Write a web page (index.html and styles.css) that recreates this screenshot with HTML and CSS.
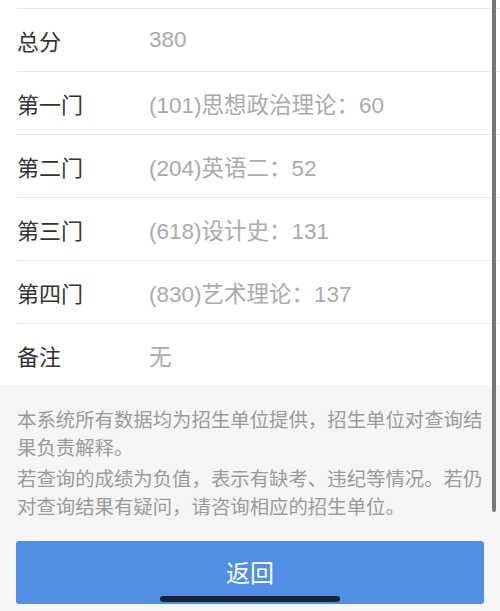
FILE: index.html
```html
<!DOCTYPE html>
<html lang="zh-CN">
<head>
<meta charset="utf-8">
<title>成绩查询结果</title>
<link rel="stylesheet" href="styles.css">
</head>
<body>
<div class="page">
  <div class="list">
    <div class="row-top"></div>
    <div class="row"><span class="label">总分</span><span class="value">380</span></div>
    <div class="row"><span class="label">第一门</span><span class="value">(101)思想政治理论：60</span></div>
    <div class="row"><span class="label">第二门</span><span class="value">(204)英语二：52</span></div>
    <div class="row"><span class="label">第三门</span><span class="value">(618)设计史：131</span></div>
    <div class="row"><span class="label">第四门</span><span class="value">(830)艺术理论：137</span></div>
    <div class="row last"><span class="label">备注</span><span class="value">无</span></div>
  </div>
  <div class="notice">
    <p>本系统所有数据均为招生单位提供，招生单位对查询结果负责解释。</p>
    <p>若查询的成绩为负值，表示有缺考、违纪等情况。若仍对查询结果有疑问，请咨询相应的招生单位。</p>
    <button class="back" type="button">返回</button>
  </div>
  <div class="scrollbar"></div>
  <div class="home-indicator"></div>
</div>
</body>
</html>
```

FILE: styles.css
```css
html, body {
  margin: 0;
  padding: 0;
}
body {
  font-family: "Liberation Sans", "Noto Sans CJK SC", sans-serif;
  background: #f5f5f5;
}
.page {
  position: relative;
  width: 500px;
  height: 611px;
  overflow: hidden;
  background: #f5f5f5;
}
.list {
  background: #fff;
}
.row-top {
  height: 8px;
  margin-left: 17px;
  border-bottom: 1px solid #e8e8e8;
}
.row {
  display: flex;
  align-items: center;
  height: 62px;
  margin-left: 17px;
  border-bottom: 1px solid #e8e8e8;
  font-size: 22px;
}
.row.last {
  border-bottom: none;
  height: 61px;
}
.label {
  width: 132px;
  color: #333;
}
.value {
  color: #ababab;
  font-size: 22.5px;
}
.notice {
  padding: 21px 16px 0 17px;
}
.notice p {
  margin: 0 0 3px;
  font-size: 19.4px;
  line-height: 28px;
  color: #9b9b9b;
}
.back {
  display: block;
  width: 468px;
  height: 63px;
  margin: 20px 0 0 -1px;
  border: none;
  border-radius: 3px;
  background: #4f8fe6;
  color: #fff;
  font-family: "Liberation Sans", "Noto Sans CJK SC", sans-serif;
  font-size: 24px;
  padding: 0 0 2px;
}
.scrollbar {
  position: absolute;
  left: 492px;
  top: 0;
  width: 4px;
  height: 512px;
  border-radius: 0 0 2px 2px;
  background: #767676;
}
.home-indicator {
  position: absolute;
  left: 160px;
  top: 596px;
  width: 180px;
  height: 6px;
  border-radius: 3px;
  background: #1c2230;
}
```
